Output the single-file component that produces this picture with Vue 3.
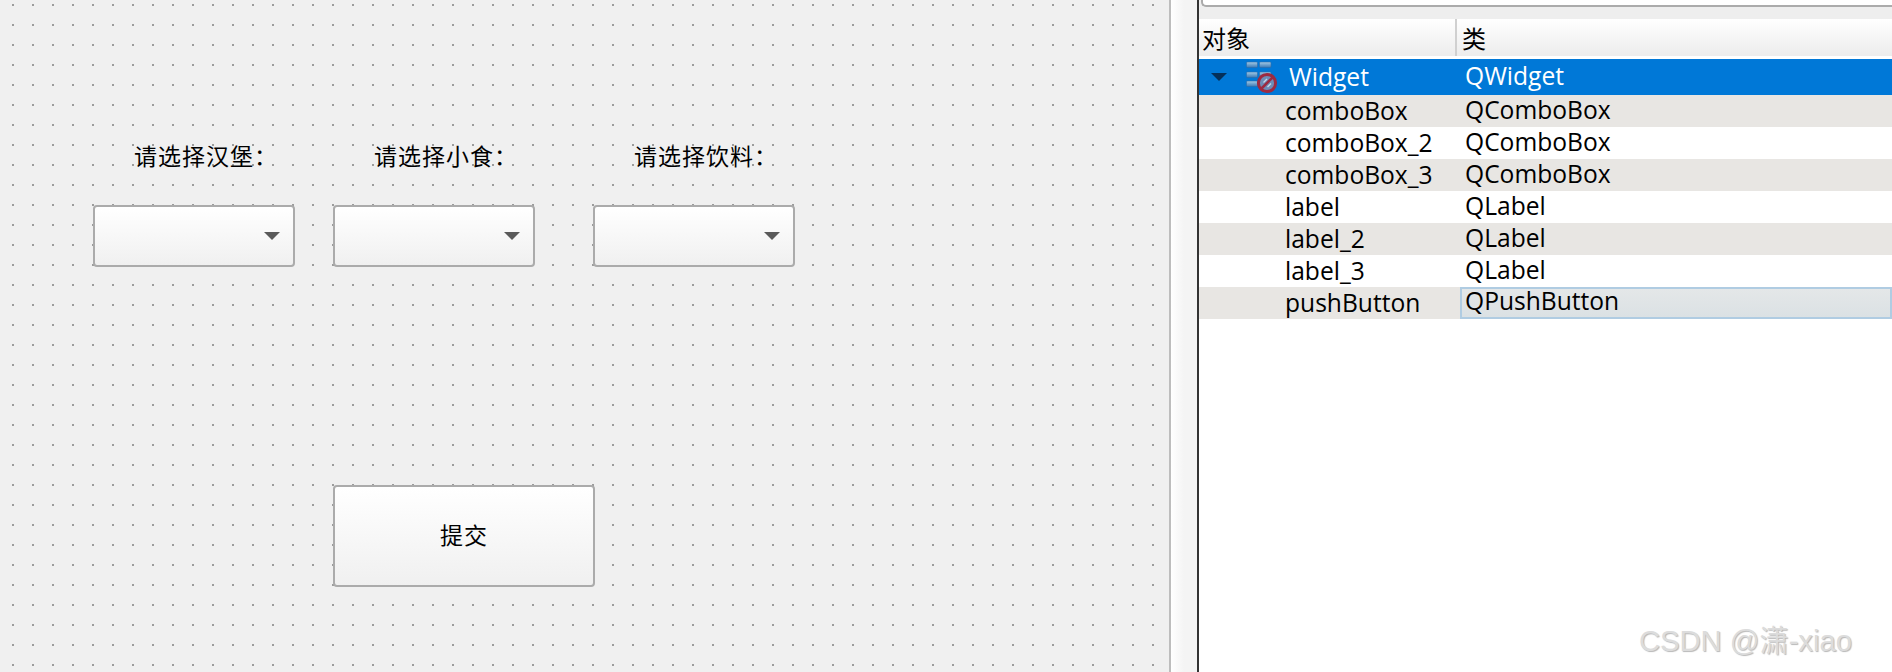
<script setup>
const labels = [
  { text: '请选择汉堡：', left: 134 },
  { text: '请选择小食：', left: 374 },
  { text: '请选择饮料：', left: 634 },
]
const combos = [
  { left: 93, width: 202 },
  { left: 333, width: 202 },
  { left: 593, width: 202 },
]
const rows = [
  ['comboBox', 'QComboBox'],
  ['comboBox_2', 'QComboBox'],
  ['comboBox_3', 'QComboBox'],
  ['label', 'QLabel'],
  ['label_2', 'QLabel'],
  ['label_3', 'QLabel'],
  ['pushButton', 'QPushButton'],
]
</script>

<template>
  <div class="app">
    <section class="form">
      <span v-for="l in labels" :key="l.text" class="label" :style="{ left: l.left + 'px' }">{{ l.text }}</span>
      <div
        v-for="c in combos"
        :key="c.left"
        class="combo"
        :style="{ left: c.left + 'px', width: c.width + 'px' }"
      >
        <i class="arrow"></i>
      </div>
      <button class="push">提交</button>
    </section>
    <div class="gutter"></div>
    <section class="inspector">
      <div class="filter"><div class="filter-box"></div></div>
      <div class="head">
        <div class="hcell h1">对象</div>
        <div class="hcell h2">类</div>
      </div>
      <div class="root">
        <i class="tri"></i>
        <svg class="ico" width="32" height="33" viewBox="0 0 32 33">
          <defs>
            <linearGradient id="bar" x1="0" y1="0" x2="0" y2="1">
              <stop offset="0" stop-color="#a5cbe6" />
              <stop offset="1" stop-color="#3c7ab4" />
            </linearGradient>
          </defs>
          <g fill="url(#bar)" stroke="#2f6ca8" stroke-width="0.6">
            <rect x="0.5" y="1" width="11" height="5.5" rx="1" />
            <rect x="13.5" y="1" width="11.5" height="5.5" rx="1" />
            <rect x="0.5" y="11" width="11" height="5.5" rx="1" />
            <rect x="13.5" y="11" width="11.5" height="5.5" rx="1" />
            <rect x="0.5" y="20" width="11" height="5.5" rx="1" />
          </g>
          <circle cx="21" cy="22" r="8.6" fill="#6d8db8" stroke="#9c2b42" stroke-width="3" />
          <path d="M15 28 L27 16" stroke="#9c2b42" stroke-width="2.6" />
          <path d="M17.5 21.5 L21 18 M21.5 26 L25 22.5" stroke="#c4d6e8" stroke-width="1.4" />
        </svg>
        <span class="c1 rootname">Widget</span>
        <span class="c2">QWidget</span>
      </div>
      <div v-for="(r, i) in rows" :key="r[0]" class="row" :class="{ alt: i % 2 === 0 }">
        <span class="c1">{{ r[0] }}</span>
        <span class="c2" :class="{ cur: i === 6 }">{{ r[1] }}</span>
      </div>
      <div class="mark">CSDN @潇-xiao</div>
    </section>
  </div>
</template>

<style scoped>
.app {
  width: 1892px;
  height: 672px;
  display: flex;
  overflow: hidden;
  background: #f0f0f0;
  font-family: "Open Sans", "Noto Sans CJK SC", sans-serif;
  color: #000;
}
.form {
  position: relative;
  width: 1169px;
  height: 672px;
  background-color: #f0f0f0;
  background-image: radial-gradient(circle at 1px 1px, #9c9c9c 0, #9c9c9c 1.2px, transparent 1.2px);
  background-size: 20px 20px;
  background-position: 12px 4px;
}
.label {
  position: absolute;
  top: 141px;
  font: 400 23px/28px "Noto Sans CJK SC", sans-serif;
  letter-spacing: 1px;
  white-space: nowrap;
  color: #000;
}
.combo {
  position: absolute;
  top: 205px;
  height: 62px;
  box-sizing: border-box;
  border: 2px solid #ababab;
  border-radius: 4px;
  background: linear-gradient(#fff, #f0f0f0);
}
.arrow {
  position: absolute;
  right: 13px;
  top: 25px;
  width: 0;
  height: 0;
  border-left: 8px solid transparent;
  border-right: 8px solid transparent;
  border-top: 8px solid #5a5a5a;
}
.push {
  position: absolute;
  left: 333px;
  top: 485px;
  width: 262px;
  height: 102px;
  box-sizing: border-box;
  border: 2px solid #ababab;
  border-radius: 4px;
  background: linear-gradient(#fff, #f0f0f0);
  font: 400 23px "Noto Sans CJK SC", sans-serif;
  letter-spacing: 1px;
  color: #000;
  padding: 0 0 4px;
}
.gutter {
  width: 30px;
  height: 672px;
  box-sizing: border-box;
  border-left: 2px solid #bdbdbd;
  border-right: 2px solid #333;
  background: linear-gradient(90deg, #fff, #f4f4f4 50%);
}
.inspector {
  position: relative;
  width: 693px;
  height: 672px;
  background: #fff;
  font-size: 24.6px;
}
.filter {
  height: 19px;
  padding-left: 2px;
  box-sizing: border-box;
  background: #eee;
}
.filter-box {
  height: 7px;
  box-sizing: border-box;
  background: #fff;
  border-left: 2px solid #ababab;
  border-bottom: 2px solid #ababab;
  border-bottom-left-radius: 5px;
}
.head {
  display: flex;
  height: 40px;
  box-sizing: border-box;
  background: linear-gradient(#fff, #ececec);
  border-bottom: 3px solid;
  border-image: linear-gradient(#b8b8b8 66%, #fff 66%) 3;
}
.hcell {
  font: 24px/38px "Noto Sans CJK SC", sans-serif;
  box-sizing: border-box;
}
.h1 {
  width: 258px;
  padding-left: 3px;
  border-right: 2px solid #d0d0d0;
}
.h2 {
  padding-left: 5px;
}
.root,
.row {
  display: flex;
  align-items: center;
  height: 32px;
  line-height: 30px;
  white-space: nowrap;
}
.root {
  height: 36px;
  line-height: 34px;
  background: #0078d7;
  color: #fff;
  position: relative;
}
.tri {
  position: absolute;
  left: 12px;
  top: 14px;
  width: 0;
  height: 0;
  border-left: 8px solid transparent;
  border-right: 8px solid transparent;
  border-top: 8px solid #04305a;
}
.ico {
  position: absolute;
  left: 47px;
  top: 2px;
}
.alt {
  background: #e8e6e3;
}
.c1 {
  width: 260px;
  padding-left: 86px;
  box-sizing: border-box;
  flex: none;
}
.rootname {
  padding-left: 90px;
}
.c2 {
  flex: 1;
  padding-left: 6px;
  height: 100%;
  box-sizing: border-box;
}
.cur {
  background: linear-gradient(#e4e7e8, #dbe1e4);
  border: 2px solid #b0cce2;
  margin-left: 1px;
  padding-left: 3px;
  line-height: 24px;
}
.mark {
  position: absolute;
  left: 440px;
  top: 617px;
  font: 29.2px "Liberation Sans", "Noto Sans CJK SC", sans-serif;
  color: #dcdcdc;
  text-shadow: 1px 1px 1px #b8b8b8, -1px -1px 0 #fff;
  white-space: nowrap;
}
</style>
